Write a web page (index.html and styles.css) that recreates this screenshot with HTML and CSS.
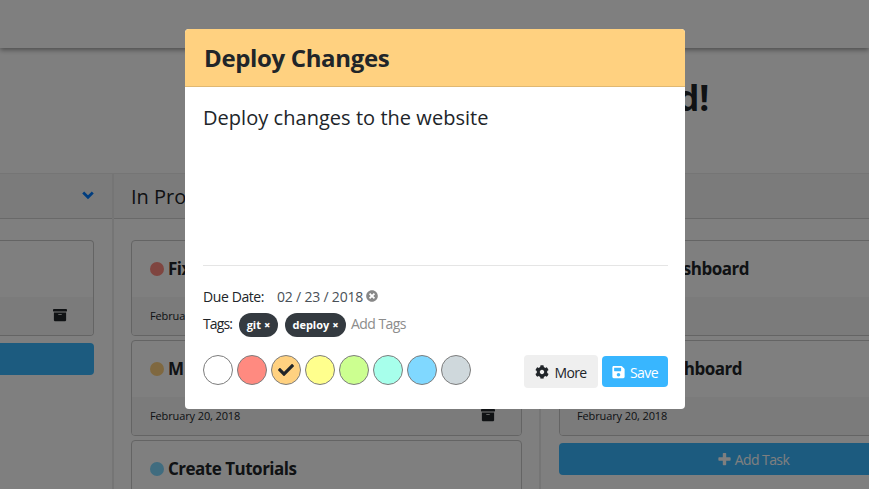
FILE: index.html
```html
<!DOCTYPE html>
<html lang="en">
<head>
<meta charset="utf-8">
<title>Task Board</title>
<link rel="stylesheet" href="styles.css">
</head>
<body>
<svg class="sprite" aria-hidden="true">
  <symbol id="archive" viewBox="0 0 512 512"><path d="M32 448c0 17.700 14.300 32 32 32h384c17.700 0 32-14.300 32-32V160H32v288zm160-212c0-6.600 5.400-12 12-12h104c6.600 0 12 5.400 12 12v8c0 6.600-5.400 12-12 12H204c-6.600 0-12-5.400-12-12v-8zM480 32H32C14.300 32 0 46.300 0 64v48c0 8.800 7.200 16 16 16h480c8.800 0 16-7.200 16-16V64c0-17.700-14.300-32-32-32z"/></symbol>
  <symbol id="gear" viewBox="0 0 512 512"><path d="M487.400 315.700l-42.600-24.600c4.300-23.200 4.300-47 0-70.200l42.600-24.600c4.900-2.800 7.100-8.600 5.500-14-11.100-35.600-30-67.800-54.700-94.600-3.800-4.100-10-5.100-14.800-2.300L380.800 110c-17.900-15.400-38.500-27.300-60.800-35.100V25.800c0-5.600-3.900-10.500-9.400-11.700-36.700-8.200-74.300-7.800-109.200 0-5.500 1.200-9.400 6.100-9.400 11.700V75c-22.200 7.900-42.800 19.800-60.800 35.100L88.700 85.500c-4.900-2.800-11-1.900-14.800 2.300-24.700 26.700-43.600 58.900-54.700 94.600-1.700 5.400.6 11.200 5.500 14L67.300 221c-4.300 23.200-4.300 47 0 70.200l-42.600 24.600c-4.900 2.800-7.100 8.600-5.500 14 11.100 35.600 30 67.800 54.700 94.600 3.800 4.100 10 5.100 14.800 2.300l42.600-24.600c17.900 15.400 38.500 27.300 60.800 35.100v49.200c0 5.600 3.900 10.500 9.400 11.700 36.700 8.200 74.300 7.800 109.200 0 5.500-1.200 9.400-6.100 9.400-11.700v-49.200c22.200-7.900 42.800-19.800 60.800-35.100l42.600 24.600c4.900 2.800 11 1.900 14.800-2.300 24.700-26.700 43.600-58.900 54.700-94.600 1.500-5.500-.7-11.300-5.600-14.100zM256 336c-44.100 0-80-35.900-80-80s35.900-80 80-80 80 35.900 80 80-35.900 80-80 80z"/></symbol>
  <symbol id="save" viewBox="0 0 448 512"><path d="M433.900 129.900l-83.900-83.900A48 48 0 0 0 316.100 32H48C21.500 32 0 53.500 0 80v352c0 26.500 21.500 48 48 48h352c26.500 0 48-21.500 48-48V163.900a48 48 0 0 0-14.100-34zM224 416c-35.300 0-64-28.700-64-64s28.700-64 64-64 64 28.700 64 64-28.700 64-64 64zm96-304.500V212c0 6.600-5.400 12-12 12H76c-6.600 0-12-5.400-12-12V108c0-6.600 5.400-12 12-12h228.500c3.200 0 6.200 1.300 8.500 3.500l3.500 3.500a12 12 0 0 1 3.500 8.500z"/></symbol>
  <symbol id="check" viewBox="0 0 512 512"><path d="M173.900 439.400l-166.400-166.400c-10-10-10-26.200 0-36.200l36.200-36.200c10-10 26.200-10 36.200 0L192 312.700 432.100 72.600c10-10 26.200-10 36.200 0l36.200 36.200c10 10 10 26.200 0 36.200l-294.400 294.400c-10 10-26.200 10-36.200 0z"/></symbol>
  <symbol id="clear" viewBox="0 0 512 512"><path d="M256 8C119 8 8 119 8 256s111 248 248 248 248-111 248-248S393 8 256 8zm121.600 313.100c4.700 4.700 4.700 12.300 0 17L338 377.600c-4.700 4.700-12.300 4.700-17 0L256 312l-65.100 65.600c-4.700 4.700-12.300 4.700-17 0L134.400 338c-4.700-4.700-4.700-12.300 0-17l65.600-65-65.600-65.100c-4.700-4.700-4.700-12.300 0-17l39.600-39.600c4.700-4.700 12.300-4.700 17 0l65 65.700 65.100-65.600c4.700-4.700 12.300-4.700 17 0l39.600 39.600c4.700 4.700 4.700 12.300 0 17L312 256l65.600 65.100z"/></symbol>
  <symbol id="chevron" viewBox="0 0 12 14"><path d="M1.200 3.600L6 8.300l4.800-4.700" fill="none" stroke="currentColor" stroke-width="2.800"/></symbol>
  <symbol id="plus" viewBox="0 0 448 512"><path d="M448 294.200v-76.400c0-13.300-10.700-24-24-24H286.200V56c0-13.300-10.700-24-24-24h-76.400c-13.300 0-24 10.700-24 24v137.800H24c-13.300 0-24 10.700-24 24v76.400c0 13.300 10.700 24 24 24h137.800V456c0 13.300 10.700 24 24 24h76.400c13.300 0 24-10.700 24-24V318.200H424c13.300 0 24-10.700 24-24z"/></symbol>
</svg>

<div class="page">
  <header class="navbar"></header>
  <h1 class="page-title"><span>Dashboard!</span></h1>
  <main class="board">
    <section class="column column-first">
      <div class="column-head"><svg class="chevron"><use href="#chevron"/></svg></div>
      <div class="column-body">
        <article class="card">
          <div class="card-body"></div>
          <div class="card-foot"><svg class="archive"><use href="#archive"/></svg></div>
        </article>
        <button class="add-task"></button>
      </div>
    </section>
    <section class="column column-middle">
      <div class="column-head"><h2>In Progress</h2></div>
      <div class="column-body">
        <article class="card">
          <div class="card-body"><i class="dot red"></i><h3>Fix</h3></div>
          <div class="card-foot"><span class="date">February 20, 2018</span><svg class="archive"><use href="#archive"/></svg></div>
        </article>
        <article class="card">
          <div class="card-body"><i class="dot orange"></i><h3>M</h3></div>
          <div class="card-foot"><span class="date">February 20, 2018</span><svg class="archive"><use href="#archive"/></svg></div>
        </article>
        <article class="card">
          <div class="card-body"><i class="dot blue"></i><h3>Create Tutorials</h3></div>
          <div class="card-foot"></div>
        </article>
      </div>
    </section>
    <section class="column column-last">
      <div class="column-head"></div>
      <div class="column-body">
        <article class="card">
          <div class="card-body"><h3 class="end-a">Dashboard</h3></div>
          <div class="card-foot"></div>
        </article>
        <article class="card">
          <div class="card-body"><h3 class="end-b">Dashboard</h3></div>
          <div class="card-foot"><span class="date">February 20, 2018</span></div>
        </article>
        <button class="add-task"><svg><use href="#plus"/></svg><span>Add Task</span></button>
      </div>
    </section>
  </main>
</div>

<div class="overlay">
  <div class="modal">
    <div class="modal-head"><h2>Deploy Changes</h2></div>
    <div class="modal-body">
      <p class="description">Deploy changes to the website</p>
      <div class="due"><span class="due-label">Due Date:</span><span class="due-value">02 / 23 / 2018</span><svg><use href="#clear"/></svg></div>
      <div class="tags"><span class="tags-label">Tags:</span><span class="tag tag-git">git <b>×</b></span><span class="tag tag-deploy">deploy <b>×</b></span><span class="add-tags">Add Tags</span></div>
      <div class="modal-foot">
        <div class="swatches">
          <i class="white"></i><i class="red"></i><i class="orange"><svg><use href="#check"/></svg></i><i class="yellow"></i><i class="green"></i><i class="teal"></i><i class="blue"></i><i class="gray"></i>
        </div>
        <div class="actions">
          <button class="more"><svg><use href="#gear"/></svg><span>More</span></button>
          <button class="save"><svg><use href="#save"/></svg><span>Save</span></button>
        </div>
      </div>
    </div>
  </div>
</div>
</body>
</html>
```

FILE: styles.css
```css
* { box-sizing: border-box; }
body {
  margin: 0;
  height: 489px;
  overflow: hidden;
  background: #fff;
  color: #212529;
  font-family: "Open Sans", "Noto Sans", sans-serif;
  font-size: 14px;
}
h1, h2, h3, p { margin: 0; white-space: nowrap; }
button { border: 0; padding: 0; font: inherit; display: flex; align-items: center; justify-content: center; }
svg { fill: currentColor; flex: none; }
i { display: block; flex: none; }
.sprite { display: none; }

.red { background: #ff8a80; }
.orange { background: #ffd180; }
.yellow { background: #ffff8d; }
.green { background: #ccff90; }
.teal { background: #a7ffeb; }
.blue { background: #80d8ff; }
.gray { background: #cfd8dc; }
.white { background: #fff; }

.page { height: 489px; overflow: hidden; }
.navbar { height: 48px; box-shadow: 0 2px 5px rgba(0, 0, 0, .4); }
.page-title {
  height: 125px;
  width: 709px;
  padding-top: 25px;
  text-align: right;
  font-size: 35px;
  line-height: 50px;
  letter-spacing: -.2px;
}

.board { display: grid; grid-template-columns: 112px 427px 428px; height: 316px; }
.column { border-left: 2px solid #eaeaea; }
.column-first { border-left: 0; }
.column-head {
  height: 46px;
  display: flex;
  align-items: center;
  padding: 0 17px;
  background: #f7f7f7;
  border-top: 1px solid #eaeaea;
  border-bottom: 1px solid #d2d2d2;
}
.column-head h2 { padding-top: 1px; font-size: 20px; font-weight: 400; line-height: 28px; letter-spacing: 0; }
.column-body { display: flex; flex-direction: column; gap: 4px; padding: 21px 17px 0; }
.column-first .column-body { padding: 21px 18px 0 0; }
.column-last .column-body { padding-left: 18px; }
.chevron { width: 12px; height: 14px; margin-left: auto; color: #007bff; }
.column-first .column-head { padding-right: 18px; }

.card { height: 96px; border: 1px solid #c8c8c8; border-radius: 4px; overflow: hidden; }
.column-first .card { border-left: 0; border-radius: 0 4px 4px 0; }
.card-body { height: 56px; padding: 0 18px; display: flex; align-items: center; }
.card-body h3 { font-size: 17px; line-height: 24px; letter-spacing: -.5px; }
.card-foot { height: 38px; padding: 0 26px 0 18px; display: flex; align-items: center; background: #f7f7f7; }
.column-last .card-foot { padding-left: 17px; }
.dot { width: 14px; height: 14px; border-radius: 50%; margin-right: 4px; }
.date { padding-bottom: 2px; font-size: 11px; letter-spacing: -.12px; }
.archive { width: 14px; height: 14px; margin-left: auto; margin-bottom: 2px; }
.end-a { width: 171px; text-align: right; }
.end-b { width: 164px; text-align: right; }
.add-task { height: 32px; margin-top: 3px; gap: 4px; background: #38b6ff; color: #fff; border-radius: 4px; }
.column-first .add-task { border-radius: 0 4px 4px 0; }
.add-task svg { width: 13px; height: 14px; }
.add-task span { padding-top: 1px; margin-right: 2px; letter-spacing: -.6px; }

.overlay {
  position: absolute;
  inset: 0;
  padding-top: 29px;
  background: rgba(0, 0, 0, .5);
}
.modal { width: 500px; height: 380px; margin-left: 185px; background: #fff; border-radius: 4px; overflow: hidden; }
.modal-head { height: 58px; padding: 0 19px; display: flex; align-items: center; background: #ffd180; border-bottom: 1px solid #e0b872; }
.modal-head h2 { font-size: 24px; line-height: 32px; letter-spacing: -.35px; }
.modal-body { padding: 0 17px 0 18px; }
.description { height: 179px; padding-top: 14px; border-bottom: 1px solid #e5e5e5; font-size: 20px; line-height: 34px; letter-spacing: .04px; }
.due { height: 20px; margin-top: 20px; display: flex; align-items: center; white-space: nowrap; }
.due-label { width: 74px; letter-spacing: -.4px; }
.due-value { width: 89px; color: #495057; letter-spacing: -.2px; }
.due svg { width: 12px; height: 12px; color: #888; }
.tags { height: 24px; margin-top: 7px; display: flex; align-items: center; white-space: nowrap; }
.tags-label { width: 36px; padding-bottom: 3px; letter-spacing: -.9px; }
.tag { height: 24px; margin-right: 7px; border-radius: 12px; background: #343a40; color: #fff; font-size: 11px; font-weight: 700; line-height: 24px; text-align: center; }
.tag-git { width: 39px; }
.tag-deploy { width: 61px; margin-right: 5px; }
.add-tags { padding-bottom: 3px; color: #8c8c8c; letter-spacing: -.55px; }
.modal-foot { display: flex; justify-content: space-between; margin-top: 18px; }
.swatches { display: flex; gap: 4px; }
.swatches i { width: 30px; height: 30px; border: 1px solid #7d7d7d; border-radius: 50%; display: flex; align-items: center; justify-content: center; }
.swatches svg { width: 16px; height: 16px; }
.actions { display: flex; align-items: center; gap: 4px; height: 33px; }
.more { width: 74px; height: 33px; gap: 5px; border-radius: 4px; background: #efefef; color: #212529; }
.save { width: 66px; height: 31px; gap: 5px; border-radius: 4px; background: #38b6ff; color: #fff; }
.more span, .save span { padding-top: 2px; letter-spacing: -.6px; }
.more svg { width: 14px; height: 14px; }
.save svg { width: 13px; height: 14px; }
```
